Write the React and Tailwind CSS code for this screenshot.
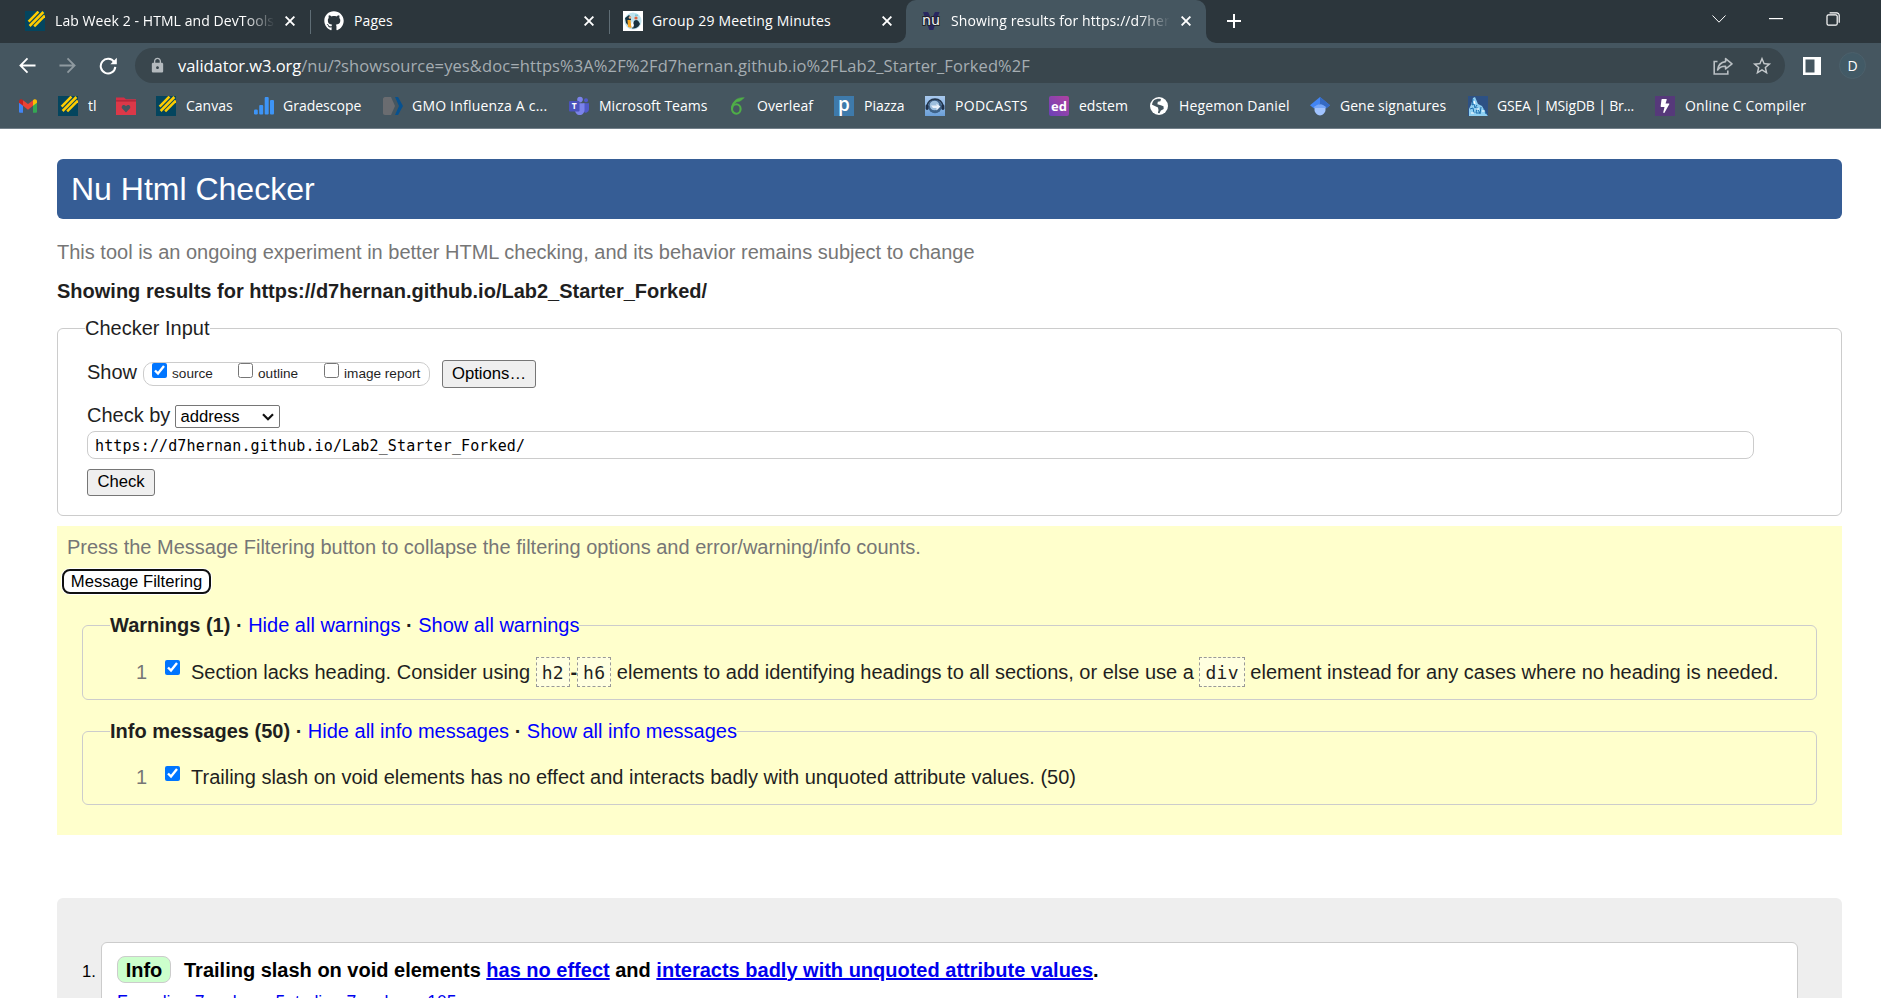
import { FaBolt, FaGithub } from "react-icons/fa";
import { MdLock, MdStarBorder } from "react-icons/md";

/* ---------- favicons ---------- */

function CanvasIcon() {
  return (
    <svg viewBox="0 0 20 20" className="size-5 shrink-0">
      <rect width="20" height="20" fill="#04455e" />
      <g stroke="#ffcd00" strokeWidth="2.5" fill="none">
        <path d="M3.6 10.6 13.4 0.6" />
        <path d="M4.6 15 18.4 1" />
        <path d="M9.2 15.4 19.8 4.6" />
      </g>
    </svg>
  );
}

function GroupIcon() {
  return (
    <svg viewBox="0 0 20 20" className="size-5 shrink-0">
      <rect width="20" height="20" fill="#fff" />
      <circle cx="10" cy="10" r="8.6" fill="#bfe3ee" />
      <path d="M2 7 6 4l2 2v3l-3 1v4l-2-2Z" fill="#15313f" />
      <path d="M4.500 9h3l1 8-3.500-1Z" fill="#f6a623" />
      <path d="M11 10c2-2 4-1 5 1l1 2c-2 4-5 5-8 4.500Z" fill="#18323f" />
      <circle cx="13" cy="7" r="1.600" fill="#e0623c" />
      <circle cx="7" cy="6.500" r="1.300" fill="#f2b48a" />
      <path d="M12 3.500h3v1.500h-3z" fill="#7cc7d8" />
      <path d="m9 10 2 4-1 3-2-3Z" fill="#fff" />
    </svg>
  );
}

function NuIcon() {
  return (
    <svg viewBox="0 0 20 20" className="size-5 shrink-0 overflow-visible">
      <path d="M2 1h5l3.500 7L14 1h4.500L12.300 19h-4Z" fill="#2a2860" />
      <text x="10" y="14" textAnchor="middle" textLength="18" lengthAdjust="spacingAndGlyphs" className="font-['DejaVu_Sans',sans-serif]" fontSize="14" fill="#f2f2f2" stroke="#20232b" strokeWidth="1.800" paintOrder="stroke">nu</text>
    </svg>
  );
}

function GmailIcon() {
  return (
    <svg viewBox="0 0 20 20" className="size-5 shrink-0">
      <path d="M1 5.500v10c0 .8.5 1.300 1.300 1.300H5V8.500Z" fill="#4285f4" />
      <path d="M15 8.500v8.300h2.700c.8 0 1.300-.5 1.300-1.300v-10Z" fill="#34a853" />
      <path d="M5 4.200v5.600l5 3.900 5-3.900V4.200l-5 3.900Z" fill="#ea4335" />
      <path d="M1 5.200v1.600l4 3V4.200l-.8-.6C2.800 2.600 1 3.500 1 5.200Z" fill="#c5221f" />
      <path d="M19 5.200v1.600l-4 3V4.200l.8-.6C17.200 2.600 19 3.500 19 5.200Z" fill="#fbbc04" />
    </svg>
  );
}

function FolderIcon() {
  return (
    <svg viewBox="0 0 20 20" className="size-5 shrink-0">
      <path d="M0 1.500h8l2 1.800h10V6H0Z" fill="#d32f45" />
      <path d="M0 5h20v14H0Z" fill="#dc3848" />
      <path d="M0 4.300h20v1.200H0Z" fill="#a82437" />
      <path d="M10 16.600 6.200 12.600c-1.300-1.800.2-4 2-3.600.8.1 1.400.6 1.800 1.200.4-.6 1-1.100 1.800-1.200 1.800-.4 3.300 1.800 2 3.600Z" fill="#455660" />
    </svg>
  );
}

function GradescopeIcon() {
  return (
    <svg viewBox="0 0 20 20" className="size-5 shrink-0" fill="#3d94f6">
      <rect x="0" y="13.500" width="3.800" height="5" rx="1.200" />
      <rect x="5.200" y="9" width="4" height="9.500" rx="1" />
      <rect x="10.700" y="1" width="4" height="17.500" rx="1" />
      <rect x="16" y="4" width="4" height="14.500" rx="1" />
    </svg>
  );
}

function NcbiIcon() {
  return (
    <svg viewBox="0 0 21 20" className="h-5 w-[21px] shrink-0">
      <path d="M2 1h6l4 9-4 9H2c-1.200 0-2-1-2-2V3c0-1 .8-2 2-2Z" fill="#6a6c70" />
      <path d="M12 1h3l5 9-5 9h-3l4-9Z" fill="#07518f" />
    </svg>
  );
}

function TeamsIcon() {
  return (
    <svg viewBox="0 0 20 20" className="size-5 shrink-0">
      <circle cx="11" cy="3.600" r="2.800" fill="#7b83eb" />
      <circle cx="17" cy="4.200" r="2" fill="#5059c9" />
      <path d="M14 7.300h6v6a3.300 3.300 0 0 1-6 2Z" fill="#5059c9" />
      <path d="M6 7.300h9.500v6.500c0 3-2 5.300-4.800 5.300S6 17 6 13.800Z" fill="#7b83eb" />
      <rect x="0" y="5" width="10.500" height="10.500" rx="1" fill="#4b53bc" />
      <text x="5.300" y="13.400" textAnchor="middle" className="font-['Open_Sans',sans-serif]" fontSize="8.500" fontWeight="700" fill="#fff">T</text>
    </svg>
  );
}

function OverleafIcon() {
  return (
    <svg viewBox="0 0 19 20" className="h-5 w-[19px] shrink-0" fill="none" stroke="#4fae47">
      <ellipse cx="6.300" cy="13" rx="4.300" ry="4.700" strokeWidth="2.100" />
      <path d="M2 13C2 8.500 4 5.800 7.500 4.400" strokeWidth="2" />
      <path d="M5 4.500C7.500 2 11 1.400 14.300 1.700 12.500 2.600 11.500 5.400 7.800 5.600 6.500 5.800 5.500 6.300 4.300 7.600Z" fill="#4fae47" strokeWidth="0.500" />
    </svg>
  );
}

function PiazzaIcon() {
  return (
    <span className="flex size-5 shrink-0 items-center justify-center bg-[#3e7aab] pb-[3px] font-['Open_Sans',sans-serif] text-[19px] leading-none font-semibold text-white">
      p
    </span>
  );
}

function PodcastIcon() {
  return (
    <svg viewBox="0 0 20 20" className="size-5 shrink-0">
      <defs>
        <linearGradient id="pod" x1="0" y1="0" x2="0" y2="1">
          <stop offset="0" stopColor="#a9c9ee" />
          <stop offset="1" stopColor="#6b9fd8" />
        </linearGradient>
      </defs>
      <rect width="20" height="20" fill="url(#pod)" />
      <circle cx="10" cy="10.500" r="6.800" fill="#3e6288" />
      <circle cx="9.500" cy="9.500" r="4.800" fill="#9dbfdd" />
      <path d="M2 11C2 .5 18 .5 18 11" fill="none" stroke="#23364d" strokeWidth="1.600" />
      <rect x="0.600" y="8.500" width="3" height="5.500" rx="1.400" fill="#20314a" />
      <rect x="16.400" y="8.500" width="3" height="5.500" rx="1.400" fill="#20314a" />
      <path d="M6 9.500h6l-1-2 4.500 3-4 4v-2.600H8Z" fill="#e8f1fa" />
    </svg>
  );
}

function EdIcon() {
  return (
    <span className="flex size-5 shrink-0 items-center justify-center rounded-[2px] bg-linear-to-tr from-[#6a3fb8] to-[#b040a0] font-['Open_Sans',sans-serif] text-[13px] leading-none font-bold text-white">
      ed
    </span>
  );
}

function GlobeIcon() {
  return (
    <svg viewBox="0 0 20 20" className="size-5 shrink-0">
      <circle cx="10" cy="10" r="9" fill="#fff" />
      <path d="M5 4.200c2-1.600 5-1.900 7-1.200l-.6 2.200-2.600.5-.4 2.600 3.400 1 2.700 1 .2 2.600-2.800 1.700-1.500 2.700-1.400-.4.300-3.200-2.400-1.700L3 10.400C2.900 8 3.500 5.800 5 4.200Z" fill="#455660" />
      <path d="M2.600 8.600 9 11.500l.4 2.400-.8 3.500C4.500 16.600 2.300 12.500 2.600 8.600Z" fill="#fff" />
    </svg>
  );
}

function ScholarIcon() {
  return (
    <svg viewBox="0 0 20 20" className="size-5 shrink-0">
      <path d="M10 1 0 9.200l4 3.200L10 8l6 4.400 4-3.200Z" fill="#4285f4" />
      <path d="M10 1v7l6 4.400 4-3.200Z" fill="#356ac3" />
      <path d="M4.500 10.500h11V14c0 2.500-3 5.500-5.500 5.500S4.500 16.500 4.500 14Z" fill="#a0c3ff" />
      <path d="M4.500 12C5.500 7 14.500 7 15.500 12Z" fill="#76a7fa" />
    </svg>
  );
}

function GseaIcon() {
  return (
    <svg viewBox="0 0 20 20" className="size-5 shrink-0">
      <rect width="20" height="20" fill="#2d5184" />
      <path d="M1 20V13l2-4 2-7 2-1 3 7 4 2 5 9 1 1Z" fill="#8fd0f2" />
      <path d="M5 3 4 9l2-1 1 4 2-3M2 13l3-1 1 5M9 11l-1 6h4l-2-3M13 11l-1 7M16 13l2 5" stroke="#1e6fae" strokeWidth="1" fill="none" />
      <path d="M3 17h3M8 13h3M6 5l1 3M14 15h3" stroke="#fff" strokeWidth="1.200" />
    </svg>
  );
}

function CompilerIcon() {
  return (
    <span className="flex size-5 shrink-0 items-center justify-center bg-[#56397a] text-white">
      <FaBolt size={14} />
    </span>
  );
}

/* ---------- browser chrome ---------- */

function Close() {
  return (
    <svg viewBox="0 0 10 10" className="size-[10px] shrink-0" stroke="#fff" strokeWidth="1.900">
      <path d="M.6.6 9.400 9.400M9.400.6.6 9.400" />
    </svg>
  );
}

const fade = "[mask-image:linear-gradient(to_right,#000_86%,transparent_100%)]";

function TabStrip() {
  return (
    <div className="flex h-[43px] bg-[#2c363c] text-[14px] leading-[38px] text-white">
      <div className="flex w-[310px] items-center pr-[15px] pb-[2px] pl-[25px]">
        <CanvasIcon />
        <span className={`ml-[10px] w-[220px] overflow-hidden whitespace-pre tracking-[0.08px] ${fade}`}>Lab Week 2 - HTML and DevTools</span>
        <span className="ml-auto"><Close /></span>
      </div>
      <div className="mt-[10px] h-6 w-px bg-[#5f6d75]" />
      <div className="flex w-[298px] items-center pr-[15px] pb-[2px] pl-[13px]">
        <FaGithub size={20} />
        <span className="ml-[10px] tracking-[0.1px]">Pages</span>
        <span className="ml-auto"><Close /></span>
      </div>
      <div className="mt-[10px] h-6 w-px bg-[#5f6d75]" />
      <div className="flex w-[286px] shrink-0 items-center pr-[7px] pb-[2px] pl-[13px]">
        <GroupIcon />
        <span className="ml-[9px] tracking-[0.19px] whitespace-pre">Group 29 Meeting Minutes</span>
        <span className="ml-auto mr-[-3px]"><Close /></span>
      </div>
      <svg viewBox="0 0 10 43" className="h-[43px] w-[10px] shrink-0">
        <path d="M0 43A10 10 0 0 0 10 33V43Z" fill="#455660" />
      </svg>
      <div className="flex w-[300px] items-center rounded-t-[10px] bg-[#455660] pr-[15px] pb-[2px] pl-[15px]">
        <NuIcon />
        <span className={`ml-[10px] w-[219px] overflow-hidden whitespace-pre tracking-[0.1px] ${fade}`}>Showing results for https://d7her</span>
        <span className="ml-auto"><Close /></span>
      </div>
      <svg viewBox="0 0 10 43" className="h-[43px] w-[10px] shrink-0">
        <path d="M10 43A10 10 0 0 1 0 33V43Z" fill="#455660" />
      </svg>
      <div className="flex items-center pb-px pl-[10px]">
        <svg viewBox="0 0 16 16" className="size-4" stroke="#fff" strokeWidth="2">
          <path d="M8 1v14M1 8h14" />
        </svg>
      </div>
      <div className="ml-auto flex items-center gap-[43px] pr-[41px] pb-[6px]">
        <svg viewBox="0 0 14 8" className="h-2 w-[14px]" stroke="#fff" fill="none">
          <path d="M.5.5 7 7.200 13.500.5" />
        </svg>
        <svg viewBox="0 0 14 2" className="h-[2px] w-[14px]">
          <path d="M0 0h14v1.200H0Z" fill="#fff" />
        </svg>
        <svg viewBox="0 0 14 14" className="size-[14px]" stroke="#fff" strokeWidth="1.200" fill="none">
          <rect x="1" y="2.800" width="10.200" height="10.400" rx="1.500" />
          <path d="M3.600.9h7.200a2.400 2.400 0 0 1 2.400 2.400v7.400" />
        </svg>
      </div>
    </div>
  );
}

function Toolbar() {
  return (
    <div className="flex h-[45px] items-center pt-[5px] pb-[5px] pl-[19px] text-white">
      <svg viewBox="0 0 18 18" className="size-[17px] shrink-0" fill="none" stroke="#fff" strokeWidth="1.900">
        <path d="M17.500 9H2M9 1.500 1.500 9 9 16.500" />
      </svg>
      <svg viewBox="0 0 18 18" className="ml-[23px] size-[17px] shrink-0" fill="none" stroke="#8f9aa0" strokeWidth="1.900">
        <path d="M.5 9H16M9 1.500 16.500 9 9 16.500" />
      </svg>
      <svg viewBox="0 0 18 18" className="ml-[23px] size-[18px] shrink-0" fill="none" stroke="#fff" strokeWidth="2">
        <path d="M15.200 5.200A7.300 7.300 0 1 0 16.300 9.800" />
        <path d="M17.800.8v6.400h-6.400Z" fill="#fff" stroke="none" />
      </svg>
      <div className="ml-[18px] flex h-[35px] w-[1650px] items-center rounded-full bg-[#39464d] pr-[12px] pl-[15px] text-[16.500px]">
        <MdLock size={17} color="#b4babe" className="-ml-px" />
        <span className="ml-[12px] pt-px tracking-[-0.06px] whitespace-pre">validator.w3.org</span>
        <span className="pt-px tracking-[0.1px] whitespace-pre text-[#a5adb2]">/nu/?showsource=yes&amp;doc=https%3A%2F%2Fd7hernan.github.io%2FLab2_Starter_Forked%2F</span>
        <svg viewBox="0 0 20 18" className="mt-px ml-auto h-[18px] w-5" fill="none" stroke="#b9bfc3" strokeWidth="1.600">
          <path d="M4.500 4.500H1.200V17h13.600v-3.400" />
          <path d="M12.600 1.600 19 6.800l-6.400 5.200V9.200c-3.400-.2-6 .9-8 3.800.4-4.300 3-7.700 8-8.400Z" strokeLinejoin="round" />
        </svg>
        <MdStarBorder size={22} color="#c4c9cc" className="ml-[18px]" />
      </div>
      <svg viewBox="0 0 18 18" className="ml-[18px] size-[18px] shrink-0">
        <path d="M0 0h18v18H0Z M2.500 2.500v13h9v-13Z" fill="#fff" fillRule="evenodd" />
      </svg>
      <div className="ml-[18px] flex size-[27px] items-center justify-center rounded-full border border-[#4c606b] bg-[#425a66] text-[14px] leading-none">D</div>
    </div>
  );
}

function Bookmark({ icon, label, box, text }) {
  return (
    <div className={`flex shrink-0 items-center ${box}`}>
      {icon}
      {label && <span className={`whitespace-pre ${text}`}>{label}</span>}
    </div>
  );
}

function Bookmarks() {
  return (
    <div className="flex h-[41px] items-center border-b border-[#73808a] pt-px pb-[5px] pl-[18px] text-[14px] leading-none text-white">
      <Bookmark icon={<GmailIcon />} box="w-10" />
      <Bookmark icon={<CanvasIcon />} label="tl" box="w-[58px]" text="ml-[10px]" />
      <Bookmark icon={<FolderIcon />} box="w-10" />
      <Bookmark icon={<CanvasIcon />} label="Canvas" box="w-[98px]" text="ml-[10px]" />
      <Bookmark icon={<GradescopeIcon />} label="Gradescope" box="w-[129px]" text="ml-[9px]" />
      <Bookmark icon={<NcbiIcon />} label="GMO Influenza A c..." box="w-[186px]" text="ml-[8px] tracking-[0.2px]" />
      <Bookmark icon={<TeamsIcon />} label="Microsoft Teams" box="w-[161px]" text="ml-[10px]" />
      <Bookmark icon={<OverleafIcon />} label="Overleaf" box="w-[104px]" text="ml-[8px] tracking-[0.1px]" />
      <Bookmark icon={<PiazzaIcon />} label="Piazza" box="w-[91px]" text="ml-[10px]" />
      <Bookmark icon={<PodcastIcon />} label="PODCASTS" box="w-[124px]" text="ml-[10px] tracking-[0.3px]" />
      <Bookmark icon={<EdIcon />} label="edstem" box="w-[100px]" text="ml-[10px]" />
      <Bookmark icon={<GlobeIcon />} label="Hegemon Daniel" box="w-[161px]" text="ml-[10px] tracking-[0.14px]" />
      <Bookmark icon={<ScholarIcon />} label="Gene signatures" box="w-[158px]" text="ml-[10px]" />
      <Bookmark icon={<GseaIcon />} label="GSEA | MSigDB | Br..." box="w-[187px]" text="ml-[9px] tracking-[-0.18px]" />
      <Bookmark icon={<CompilerIcon />} label="Online C Compiler" box="w-[160px]" text="ml-[10px] tracking-[0.16px]" />
    </div>
  );
}

/* ---------- page ---------- */

function Code({ children }) {
  return (
    <code className="border border-dashed border-[#999] bg-[#ffffe0] px-[5px] pt-[4px] pb-[3px] font-['DejaVu_Sans_Mono',monospace] text-[18px] tracking-[0.28px] text-[#1f1f1f]">
      {children}
    </code>
  );
}

function Check({ checked, label }) {
  return (
    <label className="flex">
      <input type="checkbox" defaultChecked={checked} className="size-[15px]" />
      <span className="ml-[5px] text-[13.600px] leading-[22px] whitespace-pre">{label}</span>
    </label>
  );
}

function CheckerInput() {
  return (
    <fieldset className="mt-[13px] h-[200px] rounded-[6px] border border-[#ccc] pl-[27px]">
      <legend className="leading-6">Checker Input</legend>
      <div className="mt-5 flex h-7 items-center pl-[2px]">
        <span className="mb-[5px]">Show</span>
        <div className="ml-[6px] flex h-6 w-[287px] rounded-[10px] border border-[#ccc] pl-[8px]">
          <div className="w-[86px]"><Check checked label="source" /></div>
          <div className="w-[86px]"><Check label="outline" /></div>
          <Check label="image report" />
        </div>
        <button className="ml-3 h-7 w-[94px] rounded-[3px] border border-[#767676] bg-[#efefef] text-[16.670px] leading-none text-black">Options…</button>
      </div>
      <div className="mt-[17px] flex h-[23px] items-center pl-[2px]">
        <span className="mb-[3px]">Check by</span>
        <div className="ml-[5px] flex h-[23px] w-[105px] items-center rounded-[2px] border border-[#767676] bg-white pt-px pl-[4px] text-[16.670px] leading-none text-black">
          address
          <svg viewBox="0 0 12 8" className="mr-[5px] ml-auto h-2 w-3" fill="none" stroke="#111" strokeWidth="2.200">
            <path d="m1 1.200 5 5 5-5" />
          </svg>
        </div>
      </div>
      <input
        defaultValue="https://d7hernan.github.io/Lab2_Starter_Forked/"
        className="mt-[3px] ml-[2px] block h-7 w-[1667px] rounded-[8px] border border-[#ccc] bg-white pt-[2px] pl-[7px] font-['DejaVu_Sans_Mono',monospace] text-[15px] tracking-[0.12px] text-black outline-none"
      />
      <button className="mt-[10px] ml-[2px] block h-[27px] w-[68px] rounded-[3px] border border-[#767676] bg-[#efefef] pb-px text-[16.670px] leading-none text-black">Check</button>
    </fieldset>
  );
}

function Group({ title, hide, show, box, row, mark, children }) {
  return (
    <fieldset className={`mx-[25px] rounded-[6px] border border-[#ccc] pl-[27px] ${box}`}>
      <legend className="leading-6">
        <b>{title} · </b>
        <a className="text-[#0000ff]">{hide}</a>
        <b> · </b>
        <a className="text-[#0000ff]">{show}</a>
      </legend>
      <div className={`flex h-8 items-center pl-[26px] ${row}`}>
        <span className="w-[12px] text-[#767676]">1</span>
        <input type="checkbox" defaultChecked className={`ml-[17px] size-[15px] ${mark}`} />
        <div className="ml-[11px] whitespace-nowrap">{children}</div>
      </div>
    </fieldset>
  );
}

export default function App() {
  return (
    <div className="h-[998px] w-[1881px] overflow-hidden bg-white">
      <header className="bg-[#455660] font-['Open_Sans',sans-serif]">
        <TabStrip />
        <Toolbar />
        <Bookmarks />
      </header>

      <main className="mr-[39px] ml-[57px] pt-[30px] font-['Liberation_Sans',Arial,sans-serif] text-[20px] leading-6 text-[#1f1f1f]">
        <h1 className="flex h-[60px] items-center rounded-[6px] bg-[#365d95] pl-[14px] text-[32px] text-white">Nu Html Checker</h1>
        <p className="mt-[21px] text-[#767676]">This tool is an ongoing experiment in better HTML checking, and its behavior remains subject to change</p>
        <h2 className="mt-[15px] font-bold">Showing results for https://d7hernan.github.io/Lab2_Starter_Forked/</h2>

        <CheckerInput />

        <section className="mt-[10px] h-[309px] bg-[#ffffcc] pt-[9px]">
          <p className="pl-[10px] text-[#767676]">Press the Message Filtering button to collapse the filtering options and error/warning/info counts.</p>
          <button className="mt-[10px] ml-[5px] block h-[25px] w-[149px] rounded-[8px] border-2 border-[#101010] bg-white text-[16.670px] leading-[20px] whitespace-nowrap text-black shadow-[0_0_0_1px_#fff]">Message Filtering</button>
          <Group title="Warnings (1)" hide="Hide all warnings" show="Show all warnings" box="mt-[19px] h-[87px]" row="mt-[19px]" mark="mb-[9px]">
            Section lacks heading. Consider using <Code>h2</Code>
            <b className="pl-[0.500px]">-</b>
            <Code>h6</Code> elements to add identifying headings to all sections, or else use a <Code>div</Code> element instead for any cases where no heading is needed.
          </Group>
          <Group title="Info messages (50)" hide="Hide all info messages" show="Show all info messages" box="mt-[19px] h-[86px]" row="mt-[18px]" mark="mb-[7px]">
            Trailing slash on void elements has no effect and interacts badly with unquoted attribute values. (50)
          </Group>
        </section>

        <section className="mt-[63px] flex h-[200px] rounded-[6px] bg-[#eee] pt-[44px] text-black">
          <span className="mt-[18px] w-[44px] shrink-0 pl-[25px] text-[16.670px]">1.</span>
          <article className="mr-[44px] grow rounded-t-[6px] border border-[#ccc] bg-white pt-[13px] pl-[15px]">
            <p className="flex h-[27px] items-center font-bold whitespace-pre">
              <span className="mr-[13px] flex h-[27px] w-[54px] items-center justify-center rounded-[8px] border border-[#ccc] bg-[#ccffcc]">Info</span>
              Trailing slash on void elements{" "}
              <a className="text-[#0000ee] underline">has no effect</a> and{" "}
              <a className="text-[#0000ee] underline">interacts badly with unquoted attribute values</a>.
            </p>
            <p className="mt-[9px] text-[17.500px] leading-5 text-[#0000ee]">From line 7, column 5; to line 7, column 105</p>
          </article>
        </section>
      </main>
    </div>
  );
}
